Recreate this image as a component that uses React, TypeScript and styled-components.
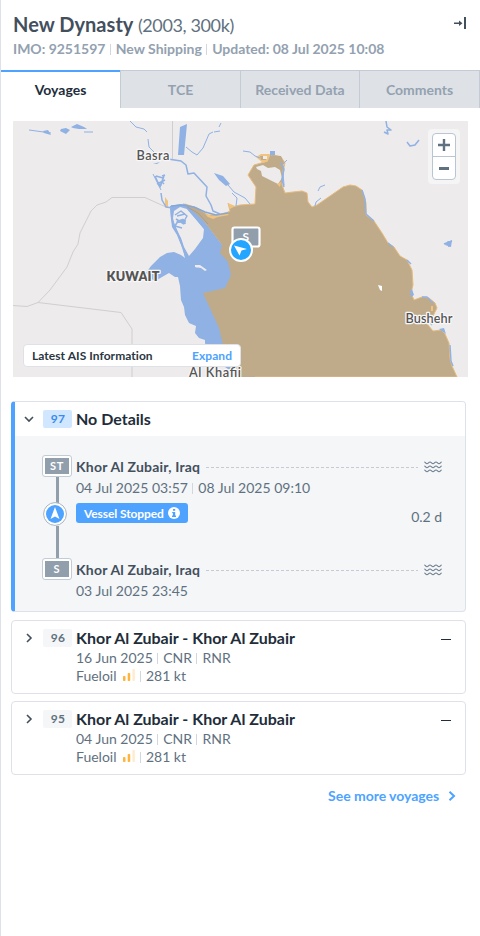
import React from "react";
import styled, { createGlobalStyle, css } from "styled-components";

const Global = createGlobalStyle`
  * { box-sizing: border-box; }
  body { margin: 0; background: #fff; font-family: Lato, "Liberation Sans", sans-serif; font-size: 14px; color: #5f7180; }
  svg { display: block; }
`;

const Panel = styled.main`
  width: 480px;
  height: 936px;
  border-left: 1px solid #dee1e7;
  background: #fff;
  overflow: hidden;
`;

const Header = styled.header`
  height: 70px;
  padding: 12px 14px 0 12px;
  display: flex;
  justify-content: space-between;
`;

const Title = styled.h1`
  margin: 0;
  font-size: 20px;
  line-height: 25px;
  font-weight: 700;
  letter-spacing: 0.04px;
  color: #434f5d;
  white-space: nowrap;
`;

const TitleNote = styled.span`
  font-size: 18px;
  font-weight: 400;
  letter-spacing: -0.38px;
  color: #5f7180;
`;

const Line = styled.div<{ $bold?: boolean; $h?: number }>`
  display: flex;
  align-items: center;
  white-space: nowrap;
  font-size: 14px;
  line-height: ${(p) => p.$h ?? 18}px;
  height: ${(p) => p.$h ?? 18}px;
  ${(p) => p.$bold && css`font-weight: 700; color: #93a1b0; letter-spacing: -0.01px;`}
`;

const Divider = styled.i`
  width: 1px;
  height: 11px;
  margin: 1px 5px 0 4.4px;
  background: #d2d7de;
`;

const CollapseButton = styled.button`
  border: 0;
  padding: 5px 0 0;
  background: none;
  align-self: flex-start;
`;

const Tabs = styled.nav`
  display: grid;
  grid-template-columns: 119px 120px 119px 121px;
  height: 38px;
`;

const Tab = styled.button<{ $active?: boolean }>`
  border: 0;
  padding: 0;
  font: 700 14px/18px Lato, sans-serif;
  color: #93a1b0;
  background: #dee1e6;
  border-top: 1px solid #c3cbd4;
  border-left: 1px solid #c3cbd4;
  &:last-child { border-right: 1px solid #c3cbd4; }
  ${(p) =>
    p.$active &&
    css`
      color: #222d3a;
      background: #fff;
      border-left: 0;
      border-top: 2px solid #4da3ff;
    `}
`;

const MapBox = styled.section`
  position: relative;
  width: 455px;
  height: 256px;
  margin: 13px 0 0 12px;
  overflow: hidden;
  background: #edebec;
`;

const ZoomFrame = styled.div`
  position: absolute;
  top: 8px;
  right: 8px;
  padding: 4px;
  border-radius: 4px;
  background: #f5f5f5;
`;

const ZoomButtons = styled.div`
  width: 24px;
  height: 47px;
  border: 1px solid #b9c5d2;
  border-radius: 4px;
  background: #fff;
  display: grid;
  grid-template-rows: 22px 23px;
`;

const ZoomButton = styled.button`
  padding: 0;
  border: 0;
  background: none;
  display: grid;
  place-items: center;
  & + & { border-top: 1px solid #b9c5d2; }
`;

const AisBar = styled.div`
  position: absolute;
  left: 10px;
  bottom: 10px;
  width: 218px;
  height: 23px;
  padding: 0 8px;
  border: 1px solid #dee1e6;
  border-radius: 4px;
  background: #fff;
  display: flex;
  align-items: center;
  justify-content: space-between;
  font-size: 12px;
  letter-spacing: 0.05px;
  font-weight: 700;
  color: #2b3643;
`;

const BlueText = styled.span`
  color: #4da3ff;
`;

const Cards = styled.section`
  margin: 24px 14px 0 10px;
`;

const OpenCard = styled.article`
  height: 211px;
  margin-bottom: 8px;
  border: 1px solid #dee1e7;
  border-left: 4px solid #4da3ff;
  border-radius: 4px;
  overflow: hidden;
  background: #f4f6f8;
`;

const OpenHead = styled.div`
  height: 34px;
  background: #fff;
  display: grid;
  grid-template-columns: 28px 33px 1fr;
  align-items: center;
`;

const Chevron = styled.span`
  display: grid;
  place-items: center;
`;

const NumberBadge = styled.span<{ $active?: boolean }>`
  width: 29px;
  height: 18px;
  border-radius: 2px;
  background: ${(p) => (p.$active ? "#d0e7ff" : "#f4f6f8")};
  color: ${(p) => (p.$active ? "#3a8bec" : "#5f7180")};
  font-size: 12px;
  line-height: 18px;
  font-weight: 700;
  letter-spacing: 0.2px;
  padding-left: 1px;
  text-align: center;
`;

const CardTitle = styled.h2`
  margin: 0;
  font-size: 16px;
  line-height: 20px;
  font-weight: 700;
  color: #222d3a;
  white-space: nowrap;
`;

const Stops = styled.div`
  display: grid;
  grid-template-columns: 28px 1fr;
  column-gap: 5px;
  padding: 19px 23px 0 28px;
`;

const Track = styled.div`
  display: flex;
  flex-direction: column;
  align-items: center;
  width: 28px;
`;

const StopTag = styled.span`
  width: 30px;
  height: 22px;
  flex: none;
  padding: 2px;
  border: 1px solid #c3cbd4;
  border-radius: 3px;
  background: #fff;
`;

const StopCode = styled.span`
  display: block;
  height: 16px;
  background: #919eac;
  color: #fff;
  font-size: 11px;
  line-height: 16px;
  font-weight: 700;
  letter-spacing: 0.8px;
  text-align: center;
`;

const Rail = styled.i<{ $h: number }>`
  width: 3px;
  height: ${(p) => p.$h}px;
  margin-left: 1px;
  background: #919eac;
`;

const Info = styled.div`
  min-width: 0;
`;

const PlaceRow = styled.div`
  display: flex;
  align-items: center;
  height: 22px;
  padding-top: 1px;
  font-weight: 700;
  letter-spacing: 0.2px;
  color: #434f5d;
  white-space: nowrap;
`;

const Dashes = styled.i`
  flex: 1;
  height: 1px;
  margin: 1px 6px 0;
  background: repeating-linear-gradient(90deg, #c3cbd4 0 3px, transparent 3px 5px);
`;

const StatusRow = styled.div`
  display: flex;
  justify-content: space-between;
  height: 60px;
  padding-top: 5px;
`;

const Status = styled.span`
  width: 112px;
  height: 20px;
  padding: 0 8px;
  border-radius: 3px;
  background: #4da3ff;
  color: #fff;
  display: flex;
  align-items: center;
  justify-content: space-between;
  font-size: 12px;
  letter-spacing: -0.1px;
  font-weight: 700;
  white-space: nowrap;
`;

const Duration = styled.span`
  padding-top: 5px;
  line-height: 18px;
  letter-spacing: -0.05px;
`;

const ClosedCard = styled.article`
  height: 74px;
  margin-bottom: 7px;
  border: 1px solid #dee1e7;
  border-radius: 4px;
  padding: 8px 14px 0 0;
  display: grid;
  grid-template-columns: 31px 33px 1fr auto;
  align-items: start;
`;

const ClosedTitle = styled(CardTitle)`
  height: 20px;
  line-height: 18px;
`;

const ClosedChevron = styled(Chevron)`
  height: 18px;
  padding-left: 3px;
`;

const Dash = styled.i`
  width: 10px;
  height: 1px;
  margin-top: 10px;
  background: #222d3a;
`;

const More = styled.button`
  border: 0;
  padding: 5px 10px 0 0;
  width: 100%;
  background: none;
  display: flex;
  justify-content: flex-end;
  align-items: center;
  gap: 9px;
  font: 700 14px/18px Lato, sans-serif;
  letter-spacing: -0.04px;
  color: #4da3ff;
`;

const Bars = styled.svg`
  margin: -2px 1px 0 6px;
`;

const Waves = () => (
  <svg width="18" height="12" viewBox="0 0 18 12" fill="none" stroke="#6f7f8e" strokeWidth="1.1">
    {[1, 5, 9].map((y) => (
      <path key={y} d={`M.3 ${y}C1.5 ${y} 1.7 ${y + 1.8} 3 ${y + 1.8}S4.6 ${y} 6 ${y}s1.7 1.8 3 1.8S10.6 ${y} 12 ${y}s1.7 1.8 3 1.8S16.6 ${y} 17.7 ${y}`} />
    ))}
  </svg>
);

const GulfMap = () => (
  <svg width="455" height="256" viewBox="13 121 455 256">
    <g fill="none" stroke="#d0cecf" strokeWidth="1">
      <path d="M13 305.500 27 306.500 38 302.500 50 290 67 267 73 252 78 244 80 233 91 211 97 205 106 202 112 197.500H145L167 207.500M38 302.500 121 312.500 132 329V377M172.500 121V160" />
    </g>
    <path fill="#8fb1e4" d="M170 206 180 204 188 205 203 220 222 245 231 262 233 275 226 289 205 293 221 330 227 350 240 377 222 365 211 350 205 343 205 340 199 338 195 333 196 326 189 323 185 315 184 307 181 300 180 286 178 277 175 277 169 273 162 277 157 280 153 280 146 273 151 266 160 257 167 253 174 252 181 255 185 258 183 249 179 240 177 235 172 227 171 219Z" />
    <path fill="#edebec" d="M174 211 180 207 187 209 195 218 204 229 203 238 195 249 189 256 184 247 181 238 175 227 173 218ZM195 265 200 265 207 270 205 271 201 268 195 267Z" />
    <path fill="#bfab8a" stroke="#e6bb7c" strokeWidth="1" strokeLinejoin="round" d="M457 377 452 366 450 359 449 343 445 334 441 330 433 331 428 325 426 318 433 316 437 308 435 303 429 298 422 297 414 300 411 293 413 285 412 270 407 260 400 256 394 247 388 243 382 233 374 221 366 215 366 203 362 190 356 186 350 185 343 187 317 205 312 207 308 202 307 193 302 191 293 192 285 193 282 185 283 171 285 163 281 157 273 155 268 161 261 163 254 165 248 175 256 187 255 204 240 205 232 207 228 203 230 211 222 215 208 215 197 208 185 204 203 220 240 260V377Z" />
    <path fill="#8fb1e4" d="M183 203 190 207 203 220 222 245 222 252 229 262 231 275 226 288 203 293 218 328 223 350 232 366 211 350 205 343 205 330 198 300 196 275 204 238 204 229 187 209Z" />
    <path fill="#edebec" d="M195 265 200 265 207 270 205 271 201 268 195 267Z" />
    <path fill="#bfab8a" d="M185 204 203 220 222 245 220 253 228 262 231 275 225 288 203 293 219 328 223 345 232 366 240 377H255L240 230 206 216Z" />
    <path fill="#edebec" d="M256 167 263 165 268 168 275 167 280 170 282 178 278 184 270 180 262 176 261 171 257 169Z" />
    <g fill="#f1c37e">
      <path d="M205 214 213 216 226 212 229 215 218 217 213 219 208 217ZM228 203 235 206 230 209ZM256 157 261 154 270 154 269 161 263 163ZM281 160 285 163 283 167 280 164ZM431 306h2v5h-2zM277 184 281 182 280 187ZM165 197 168 201 168 208 165 207Z" />
    </g>
    <path d="M260 156h6v4h-5z" fill="#bfab8a" />
    <path d="M263 156h4v3h-4z" fill="#edebec" />
    <path fill="#bfab8a" d="M270 155 281 156 284 163 280 168 272 165 266 165 268 161Z" />
    <path fill="none" stroke="#9b9a90" strokeWidth=".7" d="M187 207 198 213 208 224" />
    <g fill="#8fb1e4">
      <path d="M180 127 187 124 184 155 178 155ZM214 173 223 176 230 184 226 186 219 180ZM61 129 66 128 70 130 66 134 60 131ZM71 127 77 124 84 127 87 129 79 129 73 128ZM43 131 48 130 51 135 44 133ZM153 164 160 162 157 164ZM270 151h5v4h-5zM446 243 452 240 451 247 445 245ZM410 291l2-2 2 6-3 2ZM439 329l5-1 2 6Z" />
    </g>
    <g fill="none" stroke="#8fb1e4" strokeLinejoin="round">
      <path strokeWidth="1.800" d="M171 206 172 220 180 239 186 257" />
      <path strokeWidth="1.500" stroke="#86a7d6" d="M171 206 183 205 194 207 205 212 216 215 228 213" />
      <path strokeWidth="1.500" d="M168 159 181 161 186 165 188 174 194 173 207 187 206 196 211 205 213 211 220 214M161 193 162 200 166 207 173 208" />
      <path d="M153 174 161 190M130 121 136 127 144 129 147 132M148 139 149 147 155 153M29 130 51 133M84 132H93M186 147 192 152 197 155 203 148 209 134 213 132M214 132 220 131M219 127 221 123M243 151 250 152 255 156 260 158M228 185 234 192 245 198 250 204M232 193 237 198 236 206M281 166 287 160M283 173 284 185M315 206 316 202 321 198M318 191 320 187 325 185" />
      <path strokeWidth="1.500" d="M155 176 160 187 164 176M157 184 165 180M156 176 163 178M162 176 165 175M161 181 164 184M175 215 181 211 187 216 183 223 178 221 175 226 182 228M177 216 185 214M176 219 184 224M178 222 186 221M386 121 387 127 391 130 387 130 388 134 384 132M407 142 410 146 415 145 419 140M448 241 449 247M444 244 452 241M281 163 284 169 282 179 284 187" />
      <path strokeWidth="2.500" d="M177 222 183 220 185 224M159 186 161 184" />
      <path strokeWidth="1.400" d="M362 190 365 199 366 214 374 221M422 297 427 297 433 303M426 315 428 320 432 325M450 345 451 361 453 366M388 243 393 247M407 260 411 264" />
    </g>
    <path fill="#fff" d="M378 285 382 286 382 291 380 290Z" />
    <g fontFamily="Lato, sans-serif" fontWeight="600" fontSize="12.800" fill="#555" stroke="#f8f7f7" strokeWidth="2.500" strokeLinejoin="round" paintOrder="stroke">
      <text x="136.500" y="160" textLength="33">Basra</text>
      <text x="106.500" y="281" fontWeight="800" textLength="53">KUWAIT</text>
      <text x="405.500" y="323" textLength="47">Bushehr</text>
      <text x="189" y="376.500" textLength="52">Al Khafji</text>
    </g>
    <rect x="232.500" y="227.500" width="27" height="19" rx="2" fill="#919eac" stroke="#fff" strokeWidth="2.200" />
    <text x="242.500" y="241" fontFamily="Lato, sans-serif" fontSize="12" fontWeight="700" fill="#fff">S</text>
    <circle cx="241" cy="250" r="11" fill="#24a5ff" stroke="#fff" strokeWidth="2" />
    <path d="M234 245.500 247 249 241.500 250.500 239.500 255.500Z" fill="#fff" />
  </svg>
);

const ChevronIcon = ({ down, blue }: { down?: boolean; blue?: boolean }) => (
  <svg width={blue ? 8 : 10} height="10" viewBox={blue ? "1 0 8 10" : "0 0 10 10"} fill="none" stroke={blue ? "#4da3ff" : "#434f5d"} strokeWidth={blue ? 2 : 1.6}>
    <path d={down ? "M1 3 5 7 9 3" : blue ? "M2.500.8 7 5 2.500 9.200" : "M3 1 7 5 3 9"} />
  </svg>
);

const VesselMark = styled.svg`
  flex: none;
  margin: -1px 4px 0 0;
`;

const VesselIcon = () => (
  <VesselMark width="24" height="24" viewBox="0 0 24 24">
    <circle cx="12" cy="12" r="11.400" fill="#fff" stroke="#aab4bf" />
    <circle cx="12" cy="12" r="9" fill="#4da3ff" />
    <path d="M12 5 16.500 17 12 14.500 7.500 17Z" fill="#fff" />
  </VesselMark>
);

const Place = () => (
  <PlaceRow>
    Khor Al Zubair, Iraq
    <Dashes />
    <Waves />
  </PlaceRow>
);

const Voyage = ({ number, date }: { number: number; date: string }) => (
  <ClosedCard>
    <ClosedChevron><ChevronIcon /></ClosedChevron>
    <NumberBadge>{number}</NumberBadge>
    <div>
      <ClosedTitle>Khor Al Zubair - Khor Al Zubair</ClosedTitle>
      <Line>{date}<Divider />CNR<Divider />RNR</Line>
      <Line>
        Fueloil
        <Bars width="12" height="12" viewBox="0 0 12 12">
          <rect y="7" width="2.500" height="5" rx=".8" fill="#ffb43c" />
          <rect x="4.700" y="4" width="2.500" height="8" rx=".8" fill="#ffb43c" />
          <rect x="9.400" width="2.500" height="12" rx=".8" fill="#ffebd0" />
        </Bars>
        <Divider />281 kt
      </Line>
    </div>
    <Dash />
  </ClosedCard>
);

export default function App() {
  return (
    <>
      <Global />
      <Panel>
        <Header>
          <div>
            <Title>New Dynasty <TitleNote>(2003, 300k)</TitleNote></Title>
            <Line $bold $h={22}>IMO: 9251597<Divider />New Shipping<Divider />Updated: 08 Jul 2025 10:08</Line>
          </div>
          <CollapseButton aria-label="Collapse panel">
            <svg width="12" height="12" viewBox="0 0 12 12" fill="#434f5d">
              <path d="M10 0h2v12h-2zM0 5.500h5V3.500L8.500 6.200 5 9V7H0z" />
            </svg>
          </CollapseButton>
        </Header>
        <Tabs>
          <Tab $active>Voyages</Tab>
          <Tab>TCE</Tab>
          <Tab>Received Data</Tab>
          <Tab>Comments</Tab>
        </Tabs>
        <MapBox>
          <GulfMap />
          <ZoomFrame>
            <ZoomButtons>
              <ZoomButton aria-label="Zoom in"><svg width="12" height="12"><path d="M0 6h12M6 0v12" stroke="#5f7180" strokeWidth="2.400" /></svg></ZoomButton>
              <ZoomButton aria-label="Zoom out"><svg width="10" height="3"><path d="M0 1.500h10" stroke="#5f7180" strokeWidth="3" /></svg></ZoomButton>
            </ZoomButtons>
          </ZoomFrame>
          <AisBar>Latest AIS Information<BlueText>Expand</BlueText></AisBar>
        </MapBox>
        <Cards>
          <OpenCard>
            <OpenHead>
              <Chevron><ChevronIcon down /></Chevron>
              <NumberBadge $active>97</NumberBadge>
              <CardTitle>No Details</CardTitle>
            </OpenHead>
            <Stops>
              <Track>
                <StopTag><StopCode>ST</StopCode></StopTag>
                <Rail $h={26} />
                <VesselIcon />
                <Rail $h={32} />
                <StopTag><StopCode>S</StopCode></StopTag>
              </Track>
              <Info>
                <Place />
                <Line $h={21}>04 Jul 2025 03:57<Divider />08 Jul 2025 09:10</Line>
                <StatusRow>
                  <Status>
                    Vessel Stopped
                    <svg width="12" height="12" viewBox="0 0 12 12">
                      <circle cx="6" cy="6" r="6" fill="#fff" />
                      <path d="M5 2h2.200v1.800H5zM4.200 5h3v3.500H8V10H4V8.500h1V6.200h-.8z" fill="#4da3ff" />
                    </svg>
                  </Status>
                  <Duration>0.2 d</Duration>
                </StatusRow>
                <Place />
                <Line $h={21}>03 Jul 2025 23:45</Line>
              </Info>
            </Stops>
          </OpenCard>
          <Voyage number={96} date="16 Jun 2025" />
          <Voyage number={95} date="04 Jun 2025" />
          <More>See more voyages<ChevronIcon blue /></More>
        </Cards>
      </Panel>
    </>
  );
}
